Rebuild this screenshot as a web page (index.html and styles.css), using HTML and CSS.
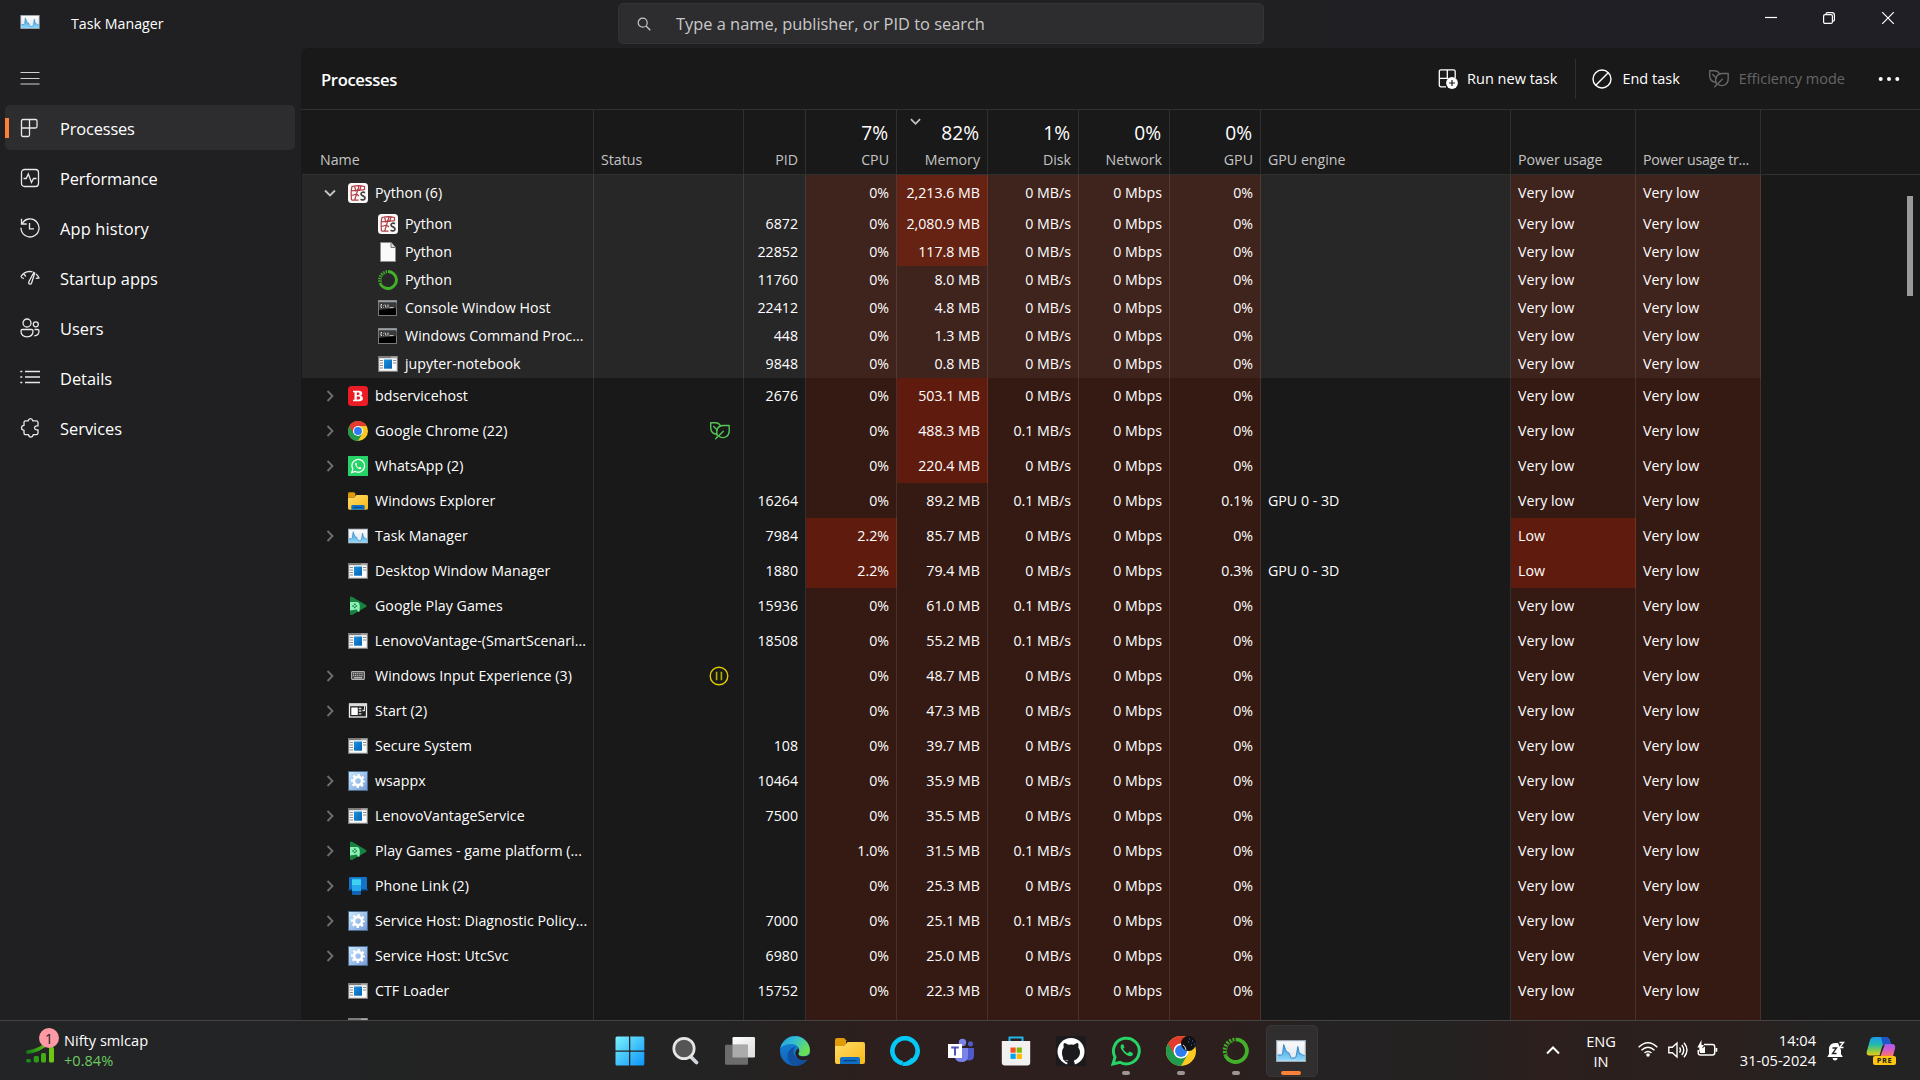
FILE: index.html
```html
<!DOCTYPE html>
<html lang="en">
<head>
<meta charset="utf-8">
<title>Task Manager</title>
<link rel="stylesheet" href="styles.css">
</head>
<body>
<svg class="sprite" aria-hidden="true">
  <defs>
    <linearGradient id="g-tm" x1="0" y1="0" x2="0" y2="1"><stop offset="0" stop-color="#fafafa"/><stop offset="1" stop-color="#dfe6ee"/></linearGradient>
    <linearGradient id="g-wave" x1="0" y1="0" x2="0" y2="1"><stop offset="0" stop-color="#3a94d6"/><stop offset="1" stop-color="#8fd8fb"/></linearGradient>
    <linearGradient id="g-blue" x1="0" y1="0" x2="1" y2="1"><stop offset="0" stop-color="#1a93e0"/><stop offset="1" stop-color="#0562b5"/></linearGradient>
    <linearGradient id="g-gear" x1="0" y1="0" x2="1" y2="1"><stop offset="0" stop-color="#cdeafb"/><stop offset="1" stop-color="#7398d8"/></linearGradient>
    <linearGradient id="g-folder" x1="0" y1="0" x2="1" y2="1"><stop offset="0" stop-color="#ffdc6b"/><stop offset="1" stop-color="#f9b914"/></linearGradient>
    <linearGradient id="g-win" gradientUnits="userSpaceOnUse" x1="0" y1="0" x2="30" y2="30"><stop offset="0" stop-color="#7cf3fd"/><stop offset="1" stop-color="#0a93f8"/></linearGradient>
    <linearGradient id="g-edge1" x1="0" y1="0" x2="1" y2=".5"><stop offset="0" stop-color="#1f9be0"/><stop offset=".5" stop-color="#35c1cf"/><stop offset="1" stop-color="#6be04f"/></linearGradient>
    <linearGradient id="g-edge2" x1="0" y1="0" x2="0" y2="1"><stop offset="0" stop-color="#1687dc"/><stop offset="1" stop-color="#0f62b8"/></linearGradient>
    <linearGradient id="g-task" x1="0" y1="0" x2="1" y2="1"><stop offset="0" stop-color="#fff"/><stop offset="1" stop-color="#dcdcdc"/></linearGradient>
    <linearGradient id="g-cop1" x1="0" y1="0" x2="0" y2="1"><stop offset="0" stop-color="#1b9af0"/><stop offset=".4" stop-color="#22b7b0"/><stop offset=".75" stop-color="#8dcb3f"/><stop offset="1" stop-color="#f4c71c"/></linearGradient>
    <linearGradient id="g-cop2" x1="0" y1="0" x2="0" y2="1"><stop offset="0" stop-color="#a45cf0"/><stop offset=".5" stop-color="#d65cc8"/><stop offset="1" stop-color="#fb7a5a"/></linearGradient>
    <linearGradient id="g-stock" x1="0" y1="0" x2="1" y2="0"><stop offset="0" stop-color="#17801a"/><stop offset="1" stop-color="#6cc810"/></linearGradient>
  </defs>
  <symbol id="i-tm" viewBox="0 0 30 22"><rect x=".6" y=".6" width="28.8" height="20.8" fill="url(#g-tm)" stroke="#9aa7b4" stroke-width="1.2"/><path d="M1.500 20.500V15h4l1-1 1.200-9.500 1.800 5 1.500 2.500 2 1 2 5h3l2-1 1.800-10.500 1.700 7.500 1.500-.5 1.500 1.500 2.500.5v5z" fill="url(#g-wave)"/><path d="M1.500 15h4l1-1L7.700 4.500l1.800 5L11 12l2 1 2 5h3l2-1 1.800-10.500L23.500 14l1.500-.5 1.500 1.500 2 .5" fill="none" stroke="#2f86c8" stroke-width=".9"/></symbol>
  <symbol id="i-spyder" viewBox="0 0 20 20"><rect width="20" height="20" rx="3.500" fill="#fbf8f8"/><path d="M3.500 17C3 12 3 7 4 3.500c4-1 9-1 12.500 0V7M3.200 8c4-.5 8-.8 13-1.200M3.500 12.500l5-1.500L11 3M8.500 11l-2 6.500M6.500 3L8 8.500M3.500 17.200h7M8.500 11l2.500 2M13 3l-1.500 5" fill="none" stroke="#b04048" stroke-width="1.200"/><path d="M17 9.700c-1.700-1-4-.5-4 1.300 0 2.200 4 1.600 4 4 0 2-2.700 2.500-4.500 1.300" fill="none" stroke="#444" stroke-width="1.700"/></symbol>
  <symbol id="i-file" viewBox="0 0 20 20"><path d="M2.500.5h10.500L17.500 5.500v14h-15z" fill="#fafafa" stroke="#8b8b8b"/><path d="M13 .5v5h4.500" fill="#ddd" stroke="#777"/></symbol>
  <symbol id="i-conda" viewBox="0 0 20 20"><path d="M10 1.500a8.500 8.500 0 1 1-7.500 12.600" fill="none" stroke="#43b02a" stroke-width="2.900"/><path d="M2.500 14.100A8.500 8.500 0 0 1 10 1.500" fill="none" stroke="#43b02a" stroke-width="2.500" stroke-dasharray="1.500 1"/><path d="M3.700 13A7.300 7.300 0 0 1 8.500 3" fill="none" stroke="#43b02a" stroke-width=".6"/></symbol>
  <symbol id="i-cmd" viewBox="0 0 20 20"><rect x=".5" y="2.500" width="18" height="15" fill="#000" stroke="#7a7a7a"/><path d="M.5 2.500h18v2H.5z" fill="#9aa2a8"/><path d="M1 5h17.500v5L1 12z" fill="#3a3a3a"/><path d="M4 6.500H3v3h1M5.500 7v.6M5.500 9v.6M7 6.500l1.200 3.300M10 6.500v3" fill="none" stroke="#e8e8e8" stroke-width=".9"/><path d="M11.500 9.500h4" stroke="#bbb"/></symbol>
  <symbol id="i-exe" viewBox="0 0 20 20"><rect x=".6" y="2.600" width="18.800" height="14.800" fill="#fbfbfb" stroke="#7c7c7c" stroke-width="1.200"/><path d="M0 2h20v2.200H0z" fill="#7c7c7c"/><path d="M13.500 3.200h1M15.500 3.200h1M17.500 3.200h1" stroke="#fff" stroke-width="1"/><rect x="6" y="5.500" width="8" height="9.200" fill="url(#g-blue)"/><path d="M1.800 6.500H5M1.800 9H5M1.800 11.500H5M1.800 14H5M15 6.500h3.200M15 9h3.200" stroke="#8a8a8a" stroke-width="1"/></symbol>
  <symbol id="i-bd" viewBox="0 0 20 20"><rect width="20" height="20" rx="3.500" fill="#ec1c24"/><path d="M5 4.800h6c4 0 4 4.500 1.500 4.900 3.500.5 3.300 5.500-1 5.500H5v-1.400h1.500V6.200H5zM8.800 6.500v2.400h1.500c1.700 0 1.700-2.400 0-2.400zM8.800 10.600v2.800h1.900c2 0 2-2.800 0-2.800z" fill="#fff" fill-rule="evenodd"/></symbol>
  <symbol id="i-chrome" viewBox="0 0 20 20"><circle cx="10" cy="10" r="10" fill="#ffca1f"/><path d="M1.340 5A10 10 0 0 0 10 20L14.330 12.500 10 10z" fill="#209a4c"/><path d="M1.340 5 5.670 12.500 10 10V5H18.660A10 10 0 0 0 1.340 5z" fill="#e33b2e"/><circle cx="10" cy="10" r="5" fill="#fff"/><circle cx="10" cy="10" r="3.950" fill="#2f7bf0"/></symbol>
  <symbol id="i-wa" viewBox="0 0 20 20"><rect width="20" height="20" fill="#25d366"/><path d="M3.800 16.500l1-3.300A6.400 6.400 0 1 1 7.300 15.500z" fill="none" stroke="#fff" stroke-width="1.300"/><path d="M7.500 6.700c-1 1-.3 3 1.500 4.800s3.600 2.200 4.400 1.100l-.2-1-1.500-.7-.9.800c-1-.4-1.900-1.300-2.300-2.200l.6-.9-.6-1.700z" fill="#fff"/></symbol>
  <symbol id="i-folder" viewBox="0 0 30 26"><path d="M0 2a2 2 0 0 1 2-2h7l3 3h-1v5H0z" fill="#e09a0a"/><path d="M0 8h9.500l3-4H28a2 2 0 0 1 2 2v18a2 2 0 0 1-2 2H2a2 2 0 0 1-2-2z" fill="url(#g-folder)"/><path d="M5 26v-5a2 2 0 0 1 2-2h16a2 2 0 0 1 2 2v5z" fill="#0f6fc4"/><path d="M8.500 22.700h13" stroke="#0a3f75" stroke-width="1.200"/></symbol>
  <symbol id="i-play" viewBox="0 0 20 20"><path d="M2 1.500q1-1.500 2.500-.5L18 9q1.300 1 0 2L4.500 18.800q-1.700.7-2.500-.5z" fill="#188341"/><path d="M2 6h7.500q2.500 1 2.300 5l-.3 4.500q-2 1-2.500-2L2 14.500z" fill="#8df0b8"/><path d="M6.800 7.500v5M4.300 10h5" stroke="#188341" stroke-width="1.600" stroke-dasharray="1.600"/></symbol>
  <symbol id="i-kbd" viewBox="0 0 20 20"><rect x="3.600" y="5.600" width="12.800" height="7.800" rx=".8" fill="#444" stroke="#b5b0b5" stroke-width="1.100"/><path d="M5 7.700h10M5 9.700h10" stroke="#ddd" stroke-width="1" stroke-dasharray="1.200 .9"/><path d="M6 11.800h8" stroke="#ddd"/></symbol>
  <symbol id="i-start" viewBox="0 0 20 20"><rect x="1.500" y="3" width="17" height="13" fill="#222" stroke="#f2f2f2" stroke-width="1.300"/><path d="M1 2.500h18v2.700H1z" fill="#ddd"/><rect x="3.300" y="6.500" width="6.500" height="7.500" fill="#fff"/><path d="M10.800 7.500h2.500M10.800 10h2.500M10.800 12.800h2.500M14.500 9.500h2" stroke="#ddd" stroke-width="1.300"/><path d="M16.500 5v5" stroke="#ddd"/></symbol>
  <symbol id="i-gear" viewBox="0 0 20 20"><rect x=".5" y=".5" width="19" height="19" fill="url(#g-gear)" stroke="#46688a"/><circle cx="10" cy="10" r="4.100" fill="none" stroke="#fff" stroke-width="2.700"/><circle cx="10" cy="10" r="6" fill="none" stroke="#fff" stroke-width="2" stroke-dasharray="2.400 2.312" stroke-dashoffset="1.200"/></symbol>
  <symbol id="i-phone" viewBox="0 0 20 20"><path d="M1 2q0-1 1-1h16q1 0 1 1v11H1z" fill="#1473c6"/><path d="M0 13h20v1.500H0z" fill="#0a4f94"/><rect x="4" y="2.500" width="9" height="16" rx="1" fill="#24a9ea"/><path d="M4 3.500h9V9H4z" fill="#3fd0f5"/><path d="M4 15h9v2.500a1 1 0 0 1-1 1H5a1 1 0 0 1-1-1z" fill="#0f62b5"/></symbol>
  <symbol id="i-leaf" viewBox="0 0 20 18"><g fill="none" stroke="currentColor" stroke-width="1.400" stroke-linejoin="round" stroke-linecap="round"><path d="M7 12.300C2.300 12 .6 9 .7 5V.8h4.500C8 .8 9.500 2 10.300 3.500"/><path d="M3.700 4.500 7.300 8"/><path d="M7.200 13.800C5.500 8 8 3.500 13 3.500h6.200V9c0 5-5 8.500-10 5.500"/><path d="M5.700 16.700 13.300 9.300"/></g></symbol>
  <symbol id="i-pause" viewBox="0 0 20 20"><circle cx="10" cy="10" r="8.800" fill="none" stroke="#e0cc00" stroke-width="1.400"/><path d="M7.600 5.700v8.600M12.400 5.700v8.600" stroke="#b0b000" stroke-width="1.600"/></symbol>
  <symbol id="i-right" viewBox="0 0 12 12"><path d="M3.500 1l5 5-5 5" fill="none" stroke="#707070" stroke-width="1.800"/></symbol>
  <symbol id="i-down" viewBox="0 0 12 12"><path d="M1 3.500l5 5 5-5" fill="none" stroke="#c4c4c4" stroke-width="1.900"/></symbol>
</svg>

<div class="window">
  <header class="titlebar">
    <svg class="app-icon"><use href="#i-tm"/></svg>
    <span class="app-title">Task Manager</span>
    <div class="search">
      <svg class="search-icon" viewBox="0 0 14 14"><circle cx="5.700" cy="5.700" r="4.500" fill="none" stroke="#c8c8c8" stroke-width="1.200"/><path d="M9 9l4.300 4.300" stroke="#c8c8c8" stroke-width="1.300"/></svg>
      <span class="search-text">Type a name, publisher, or PID to search</span>
    </div>
    <div class="caption">
      <svg viewBox="0 0 14 14"><path d="M2 6.500h12" stroke="#fff" stroke-width="1.200"/></svg>
      <svg viewBox="0 0 14 14"><g fill="none" stroke="#fff" stroke-width="1.200"><rect x="1.600" y="3.600" width="8.800" height="8.800" rx="1.500"/><path d="M4 3.500V3q0-1.400 1.400-1.400h4.700q2.300 0 2.300 2.300v5q0 1.200-1.400 1.200"/></g></svg>
      <svg viewBox="0 0 14 14"><path d="M1.200 1.200l11.600 11.600M12.800 1.200L1.200 12.800" stroke="#fff" stroke-width="1.200"/></svg>
    </div>
  </header>

  <div class="main">
    <nav class="sidebar">
      <div class="menu"><svg viewBox="0 0 20 20"><path d="M.5 4.500h19M.5 10.500h19M.5 16h19" stroke="#d0d0d0" stroke-width="1.200"/></svg></div>
      <div class="nav-item active"><svg viewBox="0 0 20 20"><path d="M3 1.500h12.500q1.500 0 1.500 1.500v5.500q0 1.500-1.500 1.500H1.500M9.500 1.500V17q0 1.500-1.500 1.500H3Q1.500 18.500 1.500 17V3Q1.500 1.500 3 1.500"/></svg><span>Processes</span></div>
      <div class="nav-item tight"><svg viewBox="0 0 20 20"><rect x="1.500" y="1.500" width="17" height="17" rx="3"/><path d="M3.500 10.500h2.700L8.300 6l3.200 8.500 2-4h3"/></svg><span>Performance</span></div>
      <div class="nav-item loose"><svg viewBox="0 0 20 20"><path d="M1.500.8V6h5.200M2 5.800a9 9 0 1 1-1 4M9.500 5v5.800H14"/></svg><span>App history</span></div>
      <div class="nav-item"><svg viewBox="0 0 20 20"><path d="M1 9.500 4 10.500M.8 8.800Q4 3.500 9.500 3.300q2 0 3 .5M4 6.200l1.800 2.300M19.300 10.500Q18 7.500 16 6M18.800 10l-3 .3M13.800 4.500 9 13.500q-.8 2.500 1 2.700 1.200 0 1.700-1.500L14.700 5z"/></svg><span>Startup apps</span></div>
      <div class="nav-item"><svg viewBox="0 0 20 20"><circle cx="7" cy="5" r="4"/><circle cx="15.800" cy="6.300" r="2.500"/><path d="M2.500 11.500h9q1.500 0 1.500 1.500 0 5.800-6 5.800T1 13q0-1.500 1.500-1.500zM14.500 11.500h3q1.500 0 1.500 1.500 0 4.500-4.700 4.800"/></svg><span>Users</span></div>
      <div class="nav-item"><svg viewBox="0 0 20 20"><path d="M5 3.500h15M5 9h15M5 14.500h15M.3 3.500h2M.3 9h2M.3 14.500h2"/></svg><span>Details</span></div>
      <div class="nav-item"><svg viewBox="0 0 20 20"><path d="M5.500 2.900h2.700q.4-2.200 2.300-2.200t2.300 2.200h3.500q1.700 0 1.700 1.700v3.200h-1.500q-2 .3-2 2t2 2H18V15q0 1.700-1.700 1.700h-3q-.5 2.400-2.500 2.400t-2.300-2.400H5.700Q4 16.700 4 15v-2.700Q1.500 12 1.500 9.800T4 7.300V4.600q0-1.700 1.500-1.700z"/></svg><span>Services</span></div>
    </nav>

    <section class="content">
      <div class="toolbar">
        <h1>Processes</h1>
        <div class="actions">
          <div class="action run"><svg viewBox="0 0 20 20"><path d="M8 17.800H3Q1.300 17.800 1.300 16V2.500Q1.300.8 3 .8h12.500q1.700 0 1.700 1.700V9M1.300 9.300h9M9.300.8v8.500" fill="none" stroke="#fff" stroke-width="1.300"/><circle cx="14" cy="14" r="5.900" fill="#fff"/><path d="M14 11v6M11 14h6" stroke="#191919" stroke-width="1.200"/></svg><span>Run new task</span></div>
          <div class="action end"><svg viewBox="0 0 20 20"><circle cx="10" cy="10" r="9" fill="none" stroke="#fff" stroke-width="1.400"/><path d="M16.200 3.800 3.800 16.200" stroke="#fff" stroke-width="1.400"/></svg><span>End task</span></div>
          <div class="action eff"><svg class="leaf"><use href="#i-leaf"/></svg><span>Efficiency mode</span></div>
          <svg class="more" viewBox="0 0 22 6"><g fill="#fff"><circle cx="2.700" cy="3" r="2"/><circle cx="11" cy="3" r="2"/><circle cx="19.300" cy="3" r="2"/></g></svg>
        </div>
      </div>
      <div class="table">
        <div class="thead row">
          <div class="cell">Name</div>
          <div class="cell">Status</div>
          <div class="cell num">PID</div>
          <div class="cell num"><b>7%</b>CPU</div>
          <div class="cell num"><svg class="sort"><use href="#i-down"/></svg><b>82%</b>Memory</div>
          <div class="cell num"><b>1%</b>Disk</div>
          <div class="cell num"><b>0%</b>Network</div>
          <div class="cell num"><b>0%</b>GPU</div>
          <div class="cell">GPU engine</div>
          <div class="cell">Power usage</div>
          <div class="cell trend">Power usage tr...</div>
          <div class="rest"></div>
        </div>
        <div class="tbody" id="rows"></div>
        <div class="scrollbar"></div>
      </div>
    </section>
  </div>
</div>

<footer class="taskbar">
  <div class="widget">
    <svg viewBox="0 0 34 36"><path d="M2 25q11-1 21-10" fill="none" stroke="url(#g-stock)" stroke-width="3.600" stroke-linecap="round"/><g><rect x="0" y="32" width="5" height="3.500" rx="1.700" fill="#1d8a1a"/><rect x="7.700" y="29" width="5.300" height="6.500" rx="1.700" fill="#2f9a18"/><rect x="15" y="26" width="5" height="9.500" rx="1.500" fill="#45ac16"/><rect x="23" y="20" width="5" height="15.500" rx="1.500" fill="#6cc810"/></g></svg>
    <span class="badge">1</span>
    <div class="widget-text"><span>Nifty smlcap</span><span class="up">+0.84%</span></div>
  </div>
  <div class="apps">
    <div class="app"><svg viewBox="0 0 30 30"><path d="M.5 2Q.5.500 2 .5h12v14H.5zM15.300.5h12.500q1.500 0 1.500 1.500v12.500h-14zM.5 15.700H14v13.800H2Q.5 29.500.5 28zM15.300 15.700h14V28q0 1.500-1.500 1.500H15.300z" fill="url(#g-win)"/></svg></div>
    <div class="app"><svg viewBox="0 0 30 30"><path d="M20.500 20.500l6 6" stroke="#d2d6dc" stroke-width="3.800" stroke-linecap="round"/><circle cx="14" cy="12.500" r="10.200" fill="#555" stroke="#e6e6e6" stroke-width="2.700"/></svg></div>
    <div class="app"><svg viewBox="0 0 30 30"><rect x="7.500" y="1" width="22.500" height="20.500" rx="1.200" fill="url(#g-task)"/><rect x="0" y="8.700" width="23" height="20" rx="1.200" fill="#6c6c6c"/><rect x="7.500" y="8.700" width="15.500" height="12.800" fill="#ababab"/></svg></div>
    <div class="app"><svg viewBox="0 0 30 30"><circle cx="15" cy="15" r="15" fill="url(#g-edge2)"/><path d="M27.700 23A15 15 0 0 1 15 30Q7.500 27 7.500 20q0-7 8-9.500-3 4-1.800 7.500Q17 25.500 27.700 23z" fill="#10509f"/><path d="M.3 12.500A15 15 0 0 1 30 14q0 6-6.500 6-5.500 0-5-2.800 1-1.400.8-2.700 0-5.500-7-6.500Q4.500 7.500.3 12.500z" fill="url(#g-edge1)"/><path d="M30 22.700Q18 27 15.500 18.500 15 14.500 18.500 12.300q1.400 2.200-.1 4.700-1 3.500 5.100 3.500 4.500 0 6.500-2.500z" fill="#2b1f1d"/></svg></div>
    <div class="app"><svg viewBox="0 -2 30 30"><use href="#i-folder" width="30" height="26"/></svg></div>
    <div class="app"><svg viewBox="0 0 30 30"><path d="M12.500 27.200a12.600 12.600 0 1 1 5 0" fill="none" stroke="#05c8f7" stroke-width="4.600"/><path d="M12.500 24v5.900q9 1 13.500-6.500l-5-1.500q-3 4-8 4.300z" fill="#05c8f7"/></svg></div>
    <div class="app"><svg viewBox="0 0 30 30"><circle cx="17.500" cy="6.500" r="3.700" fill="#7b83eb"/><circle cx="25.500" cy="7.800" r="2.600" fill="#5059c9"/><path d="M19 12h10v7.500q0 5-5 5t-5-5z" fill="#5059c9"/><path d="M10 12h13v8q0 6-6.500 6T10 20z" fill="#7b83eb"/><rect x="3" y="8" width="14" height="14" fill="#fff"/><path d="M6.200 11.500h7.600M10 11.500v8" stroke="#4b53bc" stroke-width="2"/></svg></div>
    <div class="app"><svg viewBox="0 0 30 30"><path d="M8.500 6V1.500h13V6" fill="none" stroke="#22b5e8" stroke-width="2"/><path d="M.8 5h28.400v21.500a3 3 0 0 1-3 3H3.800a3 3 0 0 1-3-3z" fill="#f1f1f1"/><path d="M9.500 11.500h5.200v5.200H9.500z" fill="#f25022"/><path d="M15.700 11.500h5.200v5.200h-5.200z" fill="#7fba00"/><path d="M9.500 17.700h5.200v5.200H9.500z" fill="#00a4ef"/><path d="M15.700 17.700h5.200v5.200h-5.200z" fill="#ffb900"/></svg></div>
    <div class="app"><svg viewBox="0 0 30 30"><rect width="30" height="30" fill="#1c1a1c"/><circle cx="15" cy="15.500" r="13.500" fill="#fff"/><path d="M11 29q.5-3.500 1.300-4.300C8 24 6 22 6 16.500q0-3 1.700-5-.7-2.500.3-4.500 2 0 4.300 1.800 2.700-.7 5.400 0Q20 7 22 7q1 2 .3 4.500 1.700 2 1.700 5 0 5.500-6.300 8.200.8.800 1.300 4.300z" fill="#1c1a1c"/><path d="M7 22.500q1.500.3 2 1.800 1 2 3.500 1.300" fill="none" stroke="#1c1a1c" stroke-width="1.300"/></svg></div>
    <div class="app running"><svg viewBox="0 0 30 30"><path d="M2 28l2-6.800A12.900 12.900 0 1 1 9 26.300z" fill="none" stroke="#25d366" stroke-width="3"/><path d="M10.500 8.500c-2 2-.5 5 2.500 8.200s7 4.600 8.900 2.300l-.2-2-3.200-1.500-1.700 1.700c-2-.6-3.800-2.500-4.600-4.400l1.300-1.500-1.300-3z" fill="#25d366"/></svg></div>
    <div class="app running"><svg viewBox="0 0 30 30"><use href="#i-chrome" width="30" height="30"/><circle cx="22.500" cy="7.500" r="7.500" fill="#111"/><path d="M23 3h1M26 5h1M22 6h1M25 9h1M28 8h1" stroke="#3450a8" stroke-width="1.500"/><path d="M17 9q2.500 1 3 5" fill="none" stroke="#ddd"/></svg></div>
    <div class="app running"><svg viewBox="-1 -1 22.500 22.500"><use href="#i-conda" width="20" height="20"/></svg></div>
    <div class="app current"><svg viewBox="0 -4 30 30"><use href="#i-tm" width="30" height="22"/></svg></div>
  </div>
  <div class="tray">
    <svg class="caret" viewBox="0 0 14 10"><path d="M1 8.500l6-6 6 6" fill="none" stroke="#fff" stroke-width="2"/></svg>
    <div class="lang"><span>ENG</span><span>IN</span></div>
    <svg class="wifi" viewBox="0 0 20 16"><g fill="none" stroke="#fff" stroke-width="1.500"><path d="M.6 6.300q9.400-9 18.800 0M3.500 9.300q6.500-6 13 0M6.500 12q3.500-3 7 0"/></g><circle cx="10" cy="14" r="1.800" fill="#fff"/></svg>
    <svg class="speaker" viewBox="0 0 20 18"><g fill="none" stroke="#fff" stroke-width="1.400"><path d="M.8 6.300h3.500L9 2v14l-4.700-4.300H.8zM11.500 6.500q2 2.500 0 5M13.800 4q4 5 0 10M16 1.700q6 7.300 0 14.600"/></g></svg>
    <svg class="battery" viewBox="0 0 21 17"><path d="M7 4.500h8.500q2.200 0 2.200 2.200v6.100q0 2.200-2.200 2.200h-12q-2.200 0-2.200-2.200V10" fill="none" stroke="#fff" stroke-width="1.500"/><path d="M18.500 8h1.800v3.700h-1.800z" fill="#fff"/><path d="M4.500 0v5H7L2.300 12V7.500H.3zM3 13V9.500l5-3V13z" fill="#fff"/></svg>
    <div class="clock"><span>14:04</span><span>31-05-2024</span></div>
    <svg class="bell" viewBox="0 0 18 20"><path d="M8 2Q2 2 2 8.500V13L.3 16h15.500L14 13V9L11 2zM5.500 17h5.200q-.5 2.500-2.600 2.500T5.500 17z" fill="#fff"/><path d="M5.500 7h4l-4 5.500h4" fill="none" stroke="#222" stroke-width="1.300"/><path d="M12.500 1.500h4l-4 5h4" fill="none" stroke="#fff" stroke-width="1.400"/></svg>
    <div class="copilot">
      <svg viewBox="0 0 30 30"><path d="M8 1h11q4 0 5 4l1 3h-5q-3 0-4 3l-2.500 8.500H3.500Q0 19.500.8 15.500L4 4Q5 1 8 1z" fill="url(#g-cop1)"/><path d="M19 1q4 0 5 4l1 3h-5q-2 0-3 1.500L15 1z" fill="#1c56c9"/><path d="M19 8h7.500q3.500.5 2.500 4.500L27 20H14.500z" fill="url(#g-cop2)"/></svg>
      <span class="pre">PRE</span>
    </div>
  </div>
</footer>
<script src="app.js"></script>
</body>
</html>
```
FILE: styles.css
```css
* { box-sizing: border-box; }

body {
  margin: 0;
  width: 1920px;
  height: 1080px;
  overflow: hidden;
  display: flex;
  flex-direction: column;
  background: #202022;
  color: #fff;
  font: 14.2px/20px "Open Sans", "Noto Sans", sans-serif;
}

.sprite { position: absolute; width: 0; height: 0; }
svg { display: block; flex: none; }

.window {
  height: 1020px;
  display: flex;
  flex-direction: column;
  background: linear-gradient(90deg, #202022 60%, #201f25 85%);
}

/* Title bar */
.titlebar {
  height: 48px;
  display: flex;
  align-items: flex-start;
  padding-left: 20px;
}
.app-icon { width: 20px; height: 14px; margin-top: 15px; }
.app-title { width: 546px; margin: 14px 0 0 31px; letter-spacing: .03px; }
.search {
  width: 646px;
  height: 41px;
  margin: 3px 0 0 1px;
  padding-left: 18px;
  display: flex;
  align-items: center;
  background: #2d2d2f;
  border: 1px solid #333335;
  border-radius: 5px;
}
.search-icon { width: 14px; height: 14px; margin-right: 25px; }
.search-text { font-size: 16.4px; color: #c9c9c9; }
.caption { display: flex; gap: 45px; margin: 11px 0 0 auto; padding-right: 25px; }
.caption svg { width: 14px; height: 14px; }

.main { flex: 1; display: flex; min-height: 0; }

/* Navigation */
.sidebar { width: 301px; padding: 0 6px 0 5px; }
.menu { height: 57px; padding: 20px 0 0 15px; }
.menu svg { width: 20px; height: 20px; }
.nav-item {
  height: 45px;
  margin-bottom: 5px;
  padding-left: 15px;
  display: flex;
  align-items: center;
  gap: 20px;
  border-radius: 5px;
  font-size: 16.4px;
}
.nav-item span { padding-top: 2px; }
.nav-item svg { width: 20px; height: 20px; fill: none; stroke: #e8e8e8; stroke-width: 1.3; }
.nav-item.active { background: linear-gradient(90deg, #ff8038 4px, transparent 4px) 0 13px / 4px 20px no-repeat #2d2d2f; }
.nav-item.active span, .nav-item.tight span { letter-spacing: -.15px; }
.nav-item.loose span { letter-spacing: .15px; }

/* Content panel */
.content {
  flex: 1;
  min-width: 0;
  display: flex;
  flex-direction: column;
  background: #191919;
  border-top-left-radius: 8px;
  padding-left: 1px;
  overflow: hidden;
}
.toolbar {
  height: 62px;
  display: flex;
  align-items: center;
  justify-content: space-between;
  border-bottom: 1px solid #303030;
  margin-left: -1px;
  padding: 0 20px 0 20px;
}
.toolbar h1 { margin: 3px 0 0; font-size: 16.6px; font-weight: 600; letter-spacing: -.35px; }
.actions { display: flex; align-items: center; }
.action { display: flex; align-items: center; gap: 9px; font-size: 14.5px; }
.action svg { width: 20px; height: 20px; }
.run { height: 40px; padding-right: 18px; border-right: 1px solid #303030; }
.end { padding-left: 16px; margin-right: 29px; }
.end span { margin-left: 1px; }
.eff { color: #666; margin-right: 33px; gap: 10px; }
.action svg.leaf { height: 18px; }
.more { width: 22px; height: 6px; }

/* Process table */
.table { position: relative; flex: 1; min-height: 0; display: flex; flex-direction: column; overflow: hidden; }
.row {
  display: grid;
  grid-template-columns: 292px 150px 62px repeat(5, 91px) 250px 125px 125px 1fr;
  height: 35px;
  flex: none;
}
.cell {
  border-right: 1px solid rgba(255, 255, 255, .1);
  padding: 0 7px;
  display: flex;
  align-items: center;
  white-space: nowrap;
  min-width: 0;
}
.num { justify-content: flex-end; padding-right: 7px; }
.thead.row { height: 65px; border-bottom: 1px solid #303030; color: #c4c4c4; }
.thead .cell {
  position: relative;
  flex-direction: column;
  align-items: flex-start;
  justify-content: flex-end;
  padding-bottom: 4px;
}
.thead .cell:first-child { padding-left: 18px; }
.thead .num { align-items: flex-end; }
.thead b { font-size: 19.2px; line-height: 26px; font-weight: 400; color: #fff; margin: 0 1px 4px 0; }
.thead .trend { letter-spacing: -.25px; }
.sort { position: absolute; left: 13px; top: 6px; width: 11px; height: 11px; }

.tbody { flex: 1; min-height: 0; overflow: hidden; }
.row.sub { height: 28px; }
.row.grouped .cell { background: #272727; }
.row .cell.warm { background: #351a14; }
.row .cell.hot { background: #5f1c0e; }
.row.grouped .cell.warm { background: #3f231d; }
.row.grouped .cell.hot { background: #662313; }
.name { padding-left: 21px; letter-spacing: .04px; }
.sub .name { padding-left: 76px; }
.name .arrow { width: 12px; height: 12px; margin-right: 12px; margin-left: 1px; }
.name .icon { width: 20px; height: 20px; margin-right: 7px; }
.status { justify-content: flex-end; padding-right: 13px; }
.status svg { width: 20px; height: 20px; color: #55c455; }
.status svg.pause { margin-right: 1px; }
.status svg.leaf { height: 18px; }
.scrollbar { position: absolute; right: 7px; top: 86px; width: 6px; height: 100px; background: #9a9a9a; }

/* Taskbar */
.taskbar {
  height: 60px;
  display: flex;
  border-top: 1px solid #434343;
  background: linear-gradient(90deg, #232426 0, #232323 38%, #2c1f1d 45%, #2c1f1d 64%, #242222 69%, #242121 76%, #2c1f1d 80%, #2a201e 90%, #232323 95%);
  font-size: 14.6px;
}
.widget { position: relative; width: 603px; padding: 7px 0 0 26px; display: flex; }
.widget svg { width: 34px; height: 36px; margin-top: -1px; }
.badge {
  position: absolute;
  left: 39px;
  top: 7px;
  width: 20px;
  height: 20px;
  border-radius: 50%;
  background: #ff99a4;
  color: #222;
  text-align: center;
}
.widget-text { display: flex; flex-direction: column; margin: 2px 0 0 4px; }
.up { color: #6ccb5f; }
.apps { display: flex; }
.app { width: 55.08px; position: relative; padding: 15px 0 0 12px; }
.app svg { position: relative; width: 30px; height: 30px; }
.running::after, .current::after {
  content: "";
  position: absolute;
  left: 23px;
  bottom: 5px;
  width: 8px;
  height: 4px;
  border-radius: 2px;
  background: #9c9592;
}
.current::after { left: 17px; width: 20px; background: #ff8038; }
.current::before {
  content: "";
  position: absolute;
  left: 2px;
  top: 4px;
  width: 50px;
  height: 50px;
  border-radius: 5px;
  background: #302e2e;
  border: 1px solid #383737;
}
.tray { margin-left: auto; padding-right: 24px; display: flex; align-items: flex-start; }
.caret { width: 14px; height: 10px; margin: 24px 26px 0 0; }
.lang, .clock { display: flex; flex-direction: column; margin-top: 9px; }
.lang { width: 30px; align-items: center; margin-top: 10px; }
.wifi { width: 20px; height: 16px; margin: 20px 10px 0 22px; }
.speaker { width: 20px; height: 18px; margin: 20px 9px 0 0; }
.battery { width: 21px; height: 17px; margin: 19px 0 0; }
.clock { width: 98px; align-items: flex-end; }
.bell { width: 18px; height: 20px; margin: 20px 21px 0 11px; }
.copilot { position: relative; margin-top: 15px; }
.copilot svg { width: 30px; height: 30px; }
.pre {
  position: absolute;
  left: 7px;
  bottom: 1px;
  width: 23px;
  height: 9px;
  border-radius: 2px;
  background: #fcc612;
  color: #1d1d1d;
  font: 700 7.5px/9px "Open Sans", sans-serif;
  text-align: center;
  letter-spacing: .5px;
}
```
FILE: app.js
```js
// icon, name, PID, CPU, memory, disk, GPU, options
// options: open/closed arrow, sub row, group shading, hot columns, status icon, GPU engine
const processes = [
  ["spyder", "Python (6)", "", "0%", "2,213.6 MB", "0", "0%", { arrow: "down", group: 1, hot: "mem" }],
  ["spyder", "Python", "6872", "0%", "2,080.9 MB", "0", "0%", { sub: 1, hot: "mem" }],
  ["file", "Python", "22852", "0%", "117.8 MB", "0", "0%", { sub: 1, hot: "mem" }],
  ["conda", "Python", "11760", "0%", "8.0 MB", "0", "0%", { sub: 1 }],
  ["cmd", "Console Window Host", "22412", "0%", "4.8 MB", "0", "0%", { sub: 1 }],
  ["cmd", "Windows Command Proc...", "448", "0%", "1.3 MB", "0", "0%", { sub: 1 }],
  ["exe", "jupyter-notebook", "9848", "0%", "0.8 MB", "0", "0%", { sub: 1 }],
  ["bd", "bdservicehost", "2676", "0%", "503.1 MB", "0", "0%", { arrow: "right", hot: "mem" }],
  ["chrome", "Google Chrome (22)", "", "0%", "488.3 MB", "0.1", "0%", { arrow: "right", hot: "mem", status: "leaf" }],
  ["wa", "WhatsApp (2)", "", "0%", "220.4 MB", "0", "0%", { arrow: "right", hot: "mem" }],
  ["folder", "Windows Explorer", "16264", "0%", "89.2 MB", "0.1", "0.1%", { engine: 1 }],
  ["tm", "Task Manager", "7984", "2.2%", "85.7 MB", "0", "0%", { arrow: "right", hot: "cpu" }],
  ["exe", "Desktop Window Manager", "1880", "2.2%", "79.4 MB", "0", "0.3%", { hot: "cpu", engine: 1 }],
  ["play", "Google Play Games", "15936", "0%", "61.0 MB", "0.1", "0%", {}],
  ["exe", "LenovoVantage-(SmartScenari...", "18508", "0%", "55.2 MB", "0.1", "0%", {}],
  ["kbd", "Windows Input Experience (3)", "", "0%", "48.7 MB", "0", "0%", { arrow: "right", status: "pause" }],
  ["start", "Start (2)", "", "0%", "47.3 MB", "0", "0%", { arrow: "right" }],
  ["exe", "Secure System", "108", "0%", "39.7 MB", "0", "0%", {}],
  ["gear", "wsappx", "10464", "0%", "35.9 MB", "0", "0%", { arrow: "right" }],
  ["exe", "LenovoVantageService", "7500", "0%", "35.5 MB", "0", "0%", { arrow: "right" }],
  ["play", "Play Games - game platform (...", "", "1.0%", "31.5 MB", "0.1", "0%", { arrow: "right" }],
  ["phone", "Phone Link (2)", "", "0%", "25.3 MB", "0", "0%", { arrow: "right" }],
  ["gear", "Service Host: Diagnostic Policy...", "7000", "0%", "25.1 MB", "0.1", "0%", { arrow: "right" }],
  ["gear", "Service Host: UtcSvc", "6980", "0%", "25.0 MB", "0", "0%", { arrow: "right" }],
  ["exe", "CTF Loader", "15752", "0%", "22.3 MB", "0", "0%", {}],
  ["exe", "", "", "", "", "", "", { blank: 1 }]
];

const use = (id, cls) => `<svg class="${cls}"><use href="#i-${id}"/></svg>`;
const cell = (cls, html) => `<div class="cell ${cls}">${html}</div>`;

document.getElementById("rows").innerHTML = processes.map(([icon, name, pid, cpu, mem, disk, gpu, o]) => {
  const heat = (key) => (o.hot === key ? "hot" : "warm");
  const arrow = o.sub ? "" : o.arrow ? use(o.arrow, "arrow") : '<span class="arrow"></span>';
  const text = (value) => (o.blank ? "" : value);
  return `<div class="row${o.sub ? " sub" : ""}${o.sub || o.group ? " grouped" : ""}">` +
    cell("name", arrow + use(icon, "icon") + `<span>${name}</span>`) +
    cell("status", o.status ? use(o.status, o.status) : "") +
    cell("num", pid) +
    cell("num " + heat("cpu"), cpu) +
    cell("num " + heat("mem"), mem) +
    cell("num warm", text(disk + " MB/s")) +
    cell("num warm", text("0 Mbps")) +
    cell("num warm", gpu) +
    cell("", o.engine ? "GPU 0 - 3D" : "") +
    cell(heat("cpu"), text(o.hot === "cpu" ? "Low" : "Very low")) +
    cell("warm", text("Very low")) +
    "</div>";
}).join("");
```
